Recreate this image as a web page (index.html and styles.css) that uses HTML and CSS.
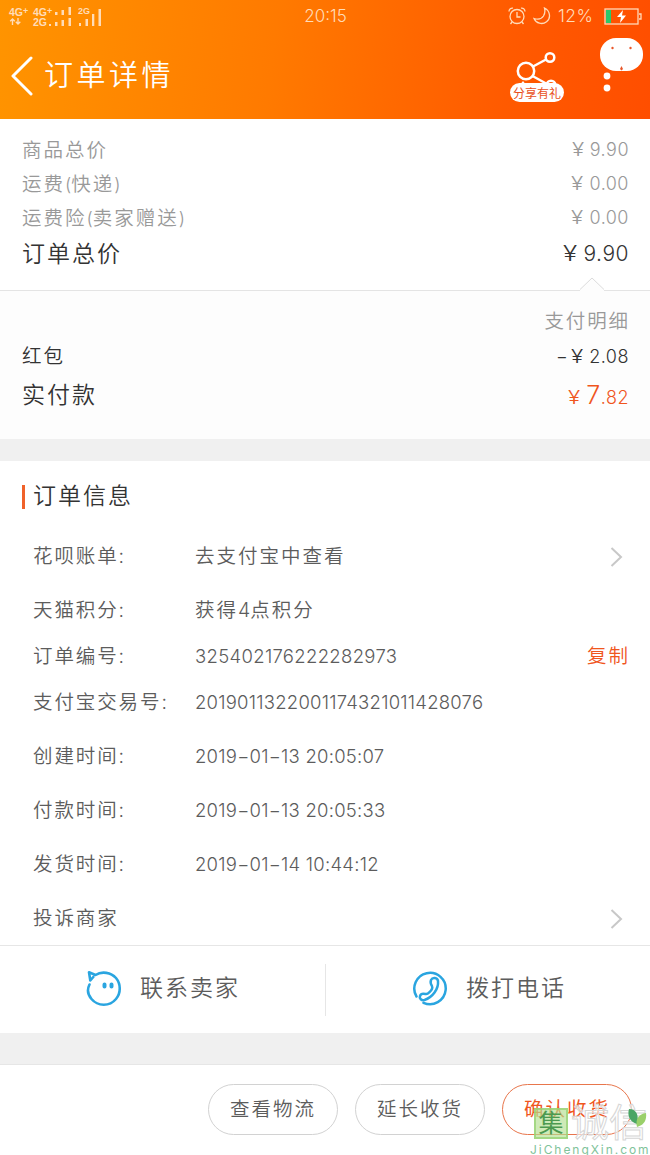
FILE: index.html
```
<!DOCTYPE html>
<html lang="zh-CN">
<head>
<meta charset="utf-8">
<title>订单详情</title>
<link rel="stylesheet" href="styles.css">
</head>
<body>
<header class="header">
  <div class="status">
    <div class="signals">
      <span class="net"><span>4G<sup>+</sup></span><svg width="12" height="7" viewBox="0 0 12 7" fill="none" stroke="currentColor" stroke-width="1.4"><path d="M3.5 7V1M1.2 3.3 3.5 1l2.3 2.3M9 0v6M6.8 3.7 9 6l2.300-2.300"/></svg></span>
      <span class="net net-b"><span>4G<sup>+</sup></span><span>2G</span></span>
      <svg class="bars-a" width="23" height="19" viewBox="0 0 23 19" fill="currentColor"><path d="M0 17h2v2H0zM6 5h2.500v3H6zM6 15h2.500v4H6zM12.500 3H15v5h-2.500zM12.500 13H15v6h-2.500zM19.500 0H22v8h-2.500zM19.500 11H22v8h-2.500z"/></svg>
      <span class="net net-c">2G</span>
      <svg class="bars-b" width="24" height="18" viewBox="0 0 24 18" fill="currentColor"><path d="M1 15h2v3H1zM7.500 11H10v7H7.500zM14 6h2.300v12H14zM20.500 1h2.500v17h-2.500z"/></svg>
    </div>
    <div class="clock">20:15</div>
    <div class="device">
      <svg width="18" height="18" viewBox="0 0 18 18" fill="none" stroke="currentColor" stroke-width="1.300"><circle cx="9" cy="9.500" r="7"/><path d="M9 5v5h3.500M1 4.500C1 2 3 .8 5 1.200M17 4.500C17 2 15 .8 13 1.200M4 15l-1.500 2M14 15l1.500 2"/></svg>
      <svg class="moon" width="18" height="18" viewBox="0 0 18 18" fill="none" stroke="currentColor" stroke-width="1.300"><path d="M11.500 1c6 3 6.500 10.500 2 13.700C9.500 18 3 16.500 1 11.500c4 1.300 7.500.7 9.500-2.500 1.600-2.700 1.700-5.300 1-8z"/></svg>
      <span class="percent">12%</span>
      <svg class="battery" width="38" height="17" viewBox="0 0 38 17"><rect x="1" y="1" width="33" height="15" fill="none" stroke="#ffd9b8" stroke-width="1.300"/><path d="M35 6h2v5h-2" fill="none" stroke="#ffd9b8" stroke-width="1.300"/><path d="M2 2h5v13H2z" fill="#2bc96b"/><path d="M19 2l-6 7h4l-1 6 6-7.500h-4z" fill="#fff"/></svg>
    </div>
  </div>
  <div class="nav">
    <svg class="back" width="24" height="40" viewBox="0 0 24 40" fill="none" stroke="#fff" stroke-width="3" stroke-linecap="round" stroke-linejoin="round"><path d="M20 2 2 20l18 18"/></svg>
    <h1 class="title">订单详情</h1>
    <div class="share">
      <svg width="54" height="36" viewBox="0 0 54 36" fill="none" stroke="#fff" stroke-width="2.500"><circle cx="16" cy="20" r="8.200"/><circle cx="40" cy="6.500" r="4.300"/><circle cx="41" cy="34" r="4.300"/><path d="M23 15.500 36 8.500M22.500 25 37 33"/><path d="M9 35l4-5 4 5z" fill="#fff" stroke="none"/></svg>
      <span class="share-tag">分享有礼</span>
    </div>
    <svg class="more" width="46" height="56" viewBox="0 0 46 56"><rect x="1" y="0" width="43" height="33" rx="16" fill="#fff"/><g fill="#e8562a"><circle cx="13.500" cy="10" r="1.200"/><circle cx="31.500" cy="10" r="1.200"/><path d="M21 31l1.500-3 1.500 3-1.500 1.500z"/></g><g fill="#fff"><circle cx="8" cy="38" r="3.400"/><circle cx="8" cy="50" r="3.400"/></g></svg>
  </div>
</header>

<section class="summary">
  <div class="line"><span>商品总价</span><span class="money"><i>¥</i>9.90</span></div>
  <div class="line"><span>运费<b>(</b>快递<b>)</b></span><span class="money"><i>¥</i>0.00</span></div>
  <div class="line"><span>运费险<b>(</b>卖家赠送<b>)</b></span><span class="money"><i>¥</i>0.00</span></div>
  <div class="line line-total"><span>订单总价</span><span class="money"><i>¥</i>9.90</span></div>
  <svg class="notch" width="26" height="14" viewBox="0 0 26 14"><path d="M1 13 13 1l12 12v1H1z" fill="#fdfdfd"/><path d="M1 12.500 13 1l12 11.500" fill="none" stroke="#dcdcdc"/></svg>
</section>

<section class="payment">
  <div class="pay-head">支付明细</div>
  <div class="line line-coupon"><span>红包</span><span class="money"><em>−</em><i>¥</i>2.08</span></div>
  <div class="line line-paid"><span>实付款</span><span class="money"><i>¥</i><strong>7</strong>.82</span></div>
</section>

<section class="info">
  <h2 class="info-title">订单信息</h2>
  <div class="row"><span class="label">花呗账单:</span><span class="text">去支付宝中查看</span><svg class="arrow" width="13" height="20" viewBox="0 0 13 20"><path d="M1.500 1l9.500 9-9.500 9"/></svg></div>
  <div class="row"><span class="label">天猫积分:</span><span class="text">获得<b>4</b>点积分</span></div>
  <div class="row row-order"><span class="label">订单编号:</span><span class="num">325402176222282973</span><span class="copy">复制</span></div>
  <div class="row row-trade"><span class="label">支付宝交易号:</span><span class="num num-trade">2019011322001174321011428076</span></div>
  <div class="row row-created"><span class="label">创建时间:</span><span class="num num-date">2019−01−13 20:05:07</span></div>
  <div class="row"><span class="label">付款时间:</span><span class="num num-date">2019−01−13 20:05:33</span></div>
  <div class="row"><span class="label">发货时间:</span><span class="num num-date">2019−01−14 10:44:12</span></div>
  <div class="row"><span class="label">投诉商家</span><svg class="arrow" width="13" height="20" viewBox="0 0 13 20"><path d="M1.500 1l9.500 9-9.500 9"/></svg></div>
</section>

<section class="contact">
  <div class="contact-item">
    <svg width="38" height="38" viewBox="0 0 38 38" fill="none" stroke="#2aa5e0" stroke-width="2.600" stroke-linecap="round" stroke-linejoin="round"><path d="M4.500 15.500C2 20.500 3 26 6.500 30A16 16 0 0 0 31 30C36 24 36 15 31 9 26 3.500 17 1.800 10.500 6L4 3.300l1.300 8.200 3-3.500"/><path d="M19.500 15.500v2M26.500 15.500v2" stroke-width="4"/></svg>
    <span>联系卖家</span>
  </div>
  <div class="contact-item contact-call">
    <svg width="38" height="38" viewBox="0 0 38 38" fill="none" stroke="#2aa5e0" stroke-width="2.500" stroke-linecap="round" stroke-linejoin="round"><path d="M5.500 27.500A15.700 15.700 0 1 1 12.500 33.800"/><path d="M20 11c1.500-3 6.500-2.500 7 1 .8 8-5.500 16.500-13.500 19-3 .8-5.500-1.500-4.500-4 .8-2.500 3.500-2.500 5.500-2 1.500.4 2.500-.3 4-1.800 2.500-2.500 3.500-4 2.500-6-1-1.700-2-3.900-1-6.200z"/></svg>
    <span>拨打电话</span>
  </div>
</section>

<footer class="actions">
  <span class="btn">查看物流</span>
  <span class="btn">延长收货</span>
  <span class="btn btn-primary">确认收货</span>
  <div class="mark">
    <div class="mark-top"><span class="mark-box">集</span><span class="mark-name">诚信</span></div>
    <div class="mark-url">JiChengXin.com</div>
    <svg class="leaf" width="20" height="22" viewBox="0 0 20 22"><path d="M2 1c8 0 10 7 8 15C3 14 0 8 2 1z" fill="#4aa564"/><path d="M10 19C8 11 12 6 19 5c1 7-2 12-9 14z" fill="#9ad06a"/></svg>
  </div>
</footer>
</body>
</html>
```
FILE: styles.css
```
* { box-sizing: border-box; }

body {
  margin: 0;
  width: 650px;
  height: 1155px;
  overflow: hidden;
  background: #fff;
  color: #5c5c5c;
  font-family: Inter, "Noto Sans CJK SC", sans-serif;
  font-weight: 350;
  font-size: 19.5px;
  line-height: 1;
}

i, em { font-style: normal; }

.header {
  height: 119px;
  background: linear-gradient(97deg, #ff9400 0%, #ff7a00 42%, #ff5a00 78%, #ff4e00 100%);
  color: #ffdcb8;
}

.status { display: grid; grid-template-columns: 1fr auto 1fr; align-items: start; height: 32px; padding: 0 8px 0 9px; }
.signals { display: flex; align-items: flex-start; padding-top: 7px; }
.net { display: flex; flex-direction: column; width: 24px; font: 700 10.500px/10px "Liberation Sans", sans-serif; }
.net sup { font-size: 9px; line-height: 0; vertical-align: 2px; }
.net svg { margin-top: 1px; }
.net-b { width: 16px; white-space: nowrap; font-size: 10.500px; line-height: 10px; }
.bars-a { width: 23px; margin-right: 6px; }
.net-c { width: 0; font-size: 9px; line-height: 9px; }
.bars-b { margin-top: 1px; }
.clock { padding-top: 8px; font-size: 17px; font-weight: 300; }
.device { display: flex; justify-content: flex-end; align-items: flex-start; padding-top: 7px; }
.moon { margin-left: 7px; }
.percent { width: 39px; margin: 0 7px 0 7px; font-size: 17.500px; font-weight: 300; letter-spacing: .4px; }
.battery { margin-top: 1px; }

.nav { display: flex; align-items: flex-start; height: 87px; padding-left: 11px; }
.back { margin-top: 24px; }
.title { margin: 29px 0 0 9px; color: #fff; font-size: 29px; font-weight: 350; letter-spacing: 3.500px; }
.share { width: 54px; height: 52px; margin: 19px 0 0 auto; }
.share svg { display: block; }
.share-tag { position: relative; display: block; height: 19px; margin-top: -4px; border-radius: 10px; background: #fff; color: #e8501c; font-size: 12px; font-weight: 400; line-height: 21px; text-align: center; }
.more { margin: 6px 5px 0 35px; }

.line { display: flex; justify-content: space-between; align-items: center; height: 34px; letter-spacing: 2px; }
.line b { font-weight: 350; letter-spacing: 0; font-size: 18px; }
.money { display: flex; align-items: baseline; font-size: 18px; letter-spacing: .5px; }
.money i { display: inline-block; width: 18px; transform: scaleX(1.250); transform-origin: left; }
.summary { position: relative; height: 172px; padding: 13px 21px 0 22px; border-bottom: 1px solid #e4e4e4; color: #999; }
.summary .line { align-items: flex-start; padding-top: 9px; }
.line-total { color: #333; font-size: 23px; letter-spacing: 2px; }
.line-total .money { font-size: 21px; }
.line-total i { width: 21px; }
.notch { position: absolute; right: 45px; bottom: -1px; }

.payment { height: 148px; padding: 13px 21px 0 22px; background: #fdfdfd; color: #333; }
.pay-head { height: 34px; margin-right: -1px; color: #999; line-height: 34px; text-align: right; letter-spacing: 1.900px; }
.line-coupon { height: 38px; }
.money em { margin-right: 3px; }
.line-paid { height: 39px; font-size: 23px; letter-spacing: 2px; }
.line-paid .money { color: #f0561d; }
.line-paid strong { font-size: 25px; font-weight: 350; }

.info { height: 507px; padding: 24px 22px 0 22px; border-top: 22px solid #f0f0f0; border-bottom: 1px solid #e6e6e6; }
.info-title { height: 24px; margin: 0 0 20px; padding-left: 8px; border-left: 3px solid #f0622a; color: #333; font-size: 23px; font-weight: 350; line-height: 23px; letter-spacing: 2px; }
.row { display: flex; align-items: center; height: 54px; padding: 1px 0 0 11px; }
.row-order { height: 46px; margin-top: -4px; }
.row-trade { height: 46px; }
.row-created { margin-top: 4px; }
.label { width: 162px; letter-spacing: 1.900px; white-space: nowrap; }
.text { letter-spacing: 2px; }
.text b { font-weight: 350; letter-spacing: 0; }
.num { font-size: 18.500px; letter-spacing: .320px; white-space: nowrap; }
.num-trade { letter-spacing: .230px; }
.num-date { letter-spacing: .240px; }
.arrow { margin: 0 5px 0 auto; fill: none; stroke: #c8c8c8; stroke-width: 2; }
.copy { margin-left: auto; margin-right: -2px; color: #f0561d; letter-spacing: 2px; }

.contact { display: grid; grid-template-columns: 326px 1fr; height: 87px; align-items: center; }
.contact-item { display: flex; align-items: center; height: 52px; padding: 0 0 3px 85px; border-right: 1px solid #e6e6e6; font-size: 23px; letter-spacing: 2px; }
.contact-item span { margin-left: 17px; }
.contact-call { border-right: 0; }

.actions { position: relative; display: flex; justify-content: flex-end; gap: 17px; height: 122px; padding: 20px 18px 0 0; border-top: 31px solid #f0f0f0; box-shadow: inset 0 1px #e6e6e6; }
.btn { width: 130px; height: 51px; border: 1px solid #d2d2d2; border-radius: 26px; line-height: 49px; text-align: center; letter-spacing: 2px; }
.btn-primary { border-color: #e8764c; color: #f0561d; font-weight: 400; }

.mark { position: absolute; left: 530px; top: 42px; width: 120px; }
.mark-top { display: flex; align-items: flex-start; height: 37px; }
.mark-box { width: 34px; height: 31px; margin: 2px 0 0 4px; border: 2px solid rgba(150, 210, 115, .75); background: rgba(180, 222, 145, .65); color: #4d9a50; font-size: 25px; font-weight: 400; line-height: 26px; text-align: center; }
.mark-name { margin-left: 3px; color: rgba(255, 255, 255, .65); font-size: 38px; font-weight: 400; line-height: 33px; -webkit-text-stroke: 1px #d6d6d6; }
.mark-url { color: #7fc39a; font: 400 12px/14px Inter, sans-serif; letter-spacing: 1.950px; white-space: nowrap; }
.leaf { position: absolute; left: 97px; top: 2px; }
```
